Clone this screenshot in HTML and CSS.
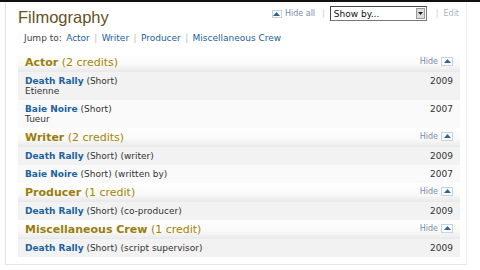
FILE: index.html
```html
<!DOCTYPE html>
<html lang="en">
<head>
    <meta charset="UTF-8">
    <title>Filmography</title>
    <link rel="stylesheet" href="styles.css">
</head>
<body>
    <div class="topline"></div>
    <div class="page">
        <div class="head">
            <h1>Filmography</h1>
            <div class="tools">
                <span class="hide-all"><span class="arrow-box small"><svg width="7" height="4" viewBox="0 0 7 4"><polygon points="0,4 3.5,0 7,4" fill="#2b64a0"/></svg></span> Hide all</span>
                <span class="sep">|</span>
                <span class="select"><span class="select-text">Show by...</span><span class="select-btn"><svg width="5" height="3" viewBox="0 0 5 3"><polygon points="0,0 5,0 2.5,3" fill="#222"/></svg></span></span>
                <span class="sep">|</span>
                <span class="edit">Edit</span>
            </div>
        </div>
        <div class="jump">Jump to: <a href="#">Actor</a> <span class="bar">|</span> <a href="#">Writer</a> <span class="bar">|</span> <a href="#">Producer</a> <span class="bar">|</span> <a href="#">Miscellaneous Crew</a></div>

        <div class="filmo">
            <div class="cat">
                <span><b>Actor</b> (2 credits)</span>
                <span class="hide">Hide <span class="arrow-box"><svg width="7" height="4" viewBox="0 0 7 4"><polygon points="0,4 3.5,0 7,4" fill="#2b64a0"/></svg></span></span>
            </div>
            <div class="row odd">
                <div><a href="#">Death Rally</a> (Short)<br>Etienne</div>
                <div class="year">2009</div>
            </div>
            <div class="row even">
                <div><a href="#">Baie Noire</a> (Short)<br>Tueur</div>
                <div class="year">2007</div>
            </div>

            <div class="cat">
                <span><b>Writer</b> (2 credits)</span>
                <span class="hide">Hide <span class="arrow-box"><svg width="7" height="4" viewBox="0 0 7 4"><polygon points="0,4 3.5,0 7,4" fill="#2b64a0"/></svg></span></span>
            </div>
            <div class="row odd">
                <div><a href="#">Death Rally</a> (Short) (writer)</div>
                <div class="year">2009</div>
            </div>
            <div class="row even">
                <div><a href="#">Baie Noire</a> (Short) (written by)</div>
                <div class="year">2007</div>
            </div>

            <div class="cat">
                <span><b>Producer</b> (1 credit)</span>
                <span class="hide">Hide <span class="arrow-box"><svg width="7" height="4" viewBox="0 0 7 4"><polygon points="0,4 3.5,0 7,4" fill="#2b64a0"/></svg></span></span>
            </div>
            <div class="row odd">
                <div><a href="#">Death Rally</a> (Short) (co-producer)</div>
                <div class="year">2009</div>
            </div>

            <div class="cat">
                <span><b>Miscellaneous Crew</b> (1 credit)</span>
                <span class="hide">Hide <span class="arrow-box"><svg width="7" height="4" viewBox="0 0 7 4"><polygon points="0,4 3.5,0 7,4" fill="#2b64a0"/></svg></span></span>
            </div>
            <div class="row odd">
                <div><a href="#">Death Rally</a> (Short) (script supervisor)</div>
                <div class="year">2009</div>
            </div>
        </div>
    </div>
</body>
</html>
```

FILE: styles.css
```css
body {
    margin: 0;
    background: #fff;
    font-family: 'DejaVu Sans', Verdana, sans-serif;
    color: #333;
    font-size: 9px;
}
a {
    color: #20629c;
    text-decoration: none;
}
.topline {
    height: 2px;
    background: #111;
}
.page {
    margin-left: 5px;
    width: 462px;
    height: 263px;
    box-sizing: border-box;
    border-left: 1px solid #e2e2e2;
    border-right: 1px solid #ececec;
    border-bottom: 1px solid #e6e6e6;
    padding: 0 7px 0 12px;
}
.head {
    display: flex;
    justify-content: space-between;
    align-items: flex-start;
    height: 29px;
}
h1 {
    margin: 6px 0 0;
    font-family: 'Liberation Sans', Arial, sans-serif;
    font-size: 16.5px;
    font-weight: normal;
    color: #65521a;
}
.tools {
    display: flex;
    align-items: center;
    gap: 5px;
    margin-top: 4px;
    font-size: 8px;
    color: #8a9ab0;
}
.hide-all {
    display: flex;
    align-items: center;
    gap: 3px;
    color: #7d8ea8;
    margin-right: 2px;
}
.sep {
    color: #ccc;
}
.select {
    display: flex;
    align-items: center;
    justify-content: space-between;
    width: 92px;
    height: 13px;
    border: 1px solid #777;
    border-top-color: #444;
    border-left-color: #444;
    background: #fff;
    padding-left: 3px;
    margin-right: 4px;
    font-size: 9px;
    color: #111;
    box-sizing: content-box;
}
.select-btn {
    display: flex;
    align-items: center;
    justify-content: center;
    width: 9px;
    height: 11px;
    margin-right: 1px;
    background: #ddd;
    border: 1px solid #999;
    box-sizing: border-box;
}
.edit {
    color: #aab6c4;
}
.jump {
    font-size: 9px;
    color: #444;
    height: 22px;
    line-height: 14px;
    margin-left: 6px;
}
.jump a {
    margin: 0 1.5px;
}
.jump .bar {
    color: #bbb;
}
.filmo {
    width: 442px;
}
.cat {
    display: flex;
    justify-content: space-between;
    align-items: center;
    height: 19px;
    padding: 0 7px;
    background: linear-gradient(#fff 0%, #f9f9f9 60%, #e9e9e9 100%);
    font-size: 11px;
    color: #a58500;
}
.cat b {
    color: #9a7e0c;
}
.hide {
    display: flex;
    align-items: center;
    gap: 3px;
    font-size: 8px;
    color: #7d8ea8;
    margin-top: -3px;
}
.arrow-box {
    display: inline-flex;
    align-items: center;
    justify-content: center;
    width: 12px;
    height: 9px;
    border: 1px solid #c4d4e4;
    background: #fff;
    box-sizing: border-box;
}
.arrow-box.small {
    width: 10px;
    height: 8px;
}
.row {
    display: flex;
    justify-content: space-between;
    padding: 4px 7px;
    line-height: 10px;
    font-size: 9px;
    color: #333;
}
.row a {
    font-weight: bold;
}
.odd {
    background: #f2f2f2;
}
.even {
    background: #fafafa;
}
.year {
    color: #333;
}
```
